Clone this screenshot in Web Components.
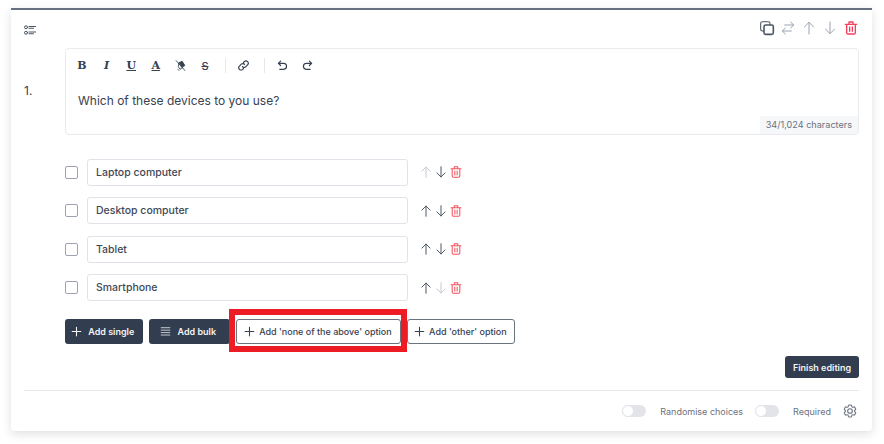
<!DOCTYPE html>
<html lang="en">
<head>
<meta charset="utf-8">
<title>Question editor</title>
<style>
	html, body { margin: 0; background: #fff; }
	body { min-height: 444px; overflow: hidden; font-family: Inter, "Liberation Sans", sans-serif; color: #374151; }
</style>
</head>
<body>
<question-card number="1.">
	<rich-editor slot="editor" count="34/1,024 characters">Which of these devices to you use?</rich-editor>

	<choice-row first>Laptop computer</choice-row>
	<choice-row>Desktop computer</choice-row>
	<choice-row>Tablet</choice-row>
	<choice-row last>Smartphone</choice-row>

	<action-button slot="actions" variant="dark" icon="plus" w="78">Add single</action-button>
	<action-button slot="actions" variant="dark" icon="bars" w="81">Add bulk</action-button>
	<action-button slot="actions" icon="plus" w="165" flagged>Add 'none of the above' option</action-button>
	<action-button slot="actions" icon="plus" w="108">Add 'other' option</action-button>

	<toggle-field slot="footer">Randomise choices</toggle-field>
	<toggle-field slot="footer">Required</toggle-field>
</question-card>

<script>
const ICONS = {
	plus: '<path d="M12 4v16M4 12h16"/>',
	bars: '<path d="M4 5h16M4 9.500h16M4 14h16M4 18.500h16"/>',
	up: '<path d="M12 21V3.500M5 10.500l7-7 7 7"/>',
	down: '<path d="M12 3v17.500M5 13.500l7 7 7-7"/>',
	swap: '<path d="M8 12l-4.500 4.500L8 21M3.500 16.500H17M16 3l4.500 4.500L16 12M20.500 7.500H7"/>',
	copy: '<rect x="2.500" y="2.500" width="14" height="14" rx="2.500"/><rect x="7.500" y="7.500" width="14" height="14" rx="2.500" fill="#fff" stroke-width="2.400"/>',
	trash: '<path d="M3.500 6.500h17M9 6.500V3h6v3.500M5.500 6.500V19a2 2 0 0 0 2 2h9a2 2 0 0 0 2-2V6.500M10 10.500v6.500M14 10.500v6.500"/>',
	list: '<circle cx="4" cy="6.500" r="3"/><circle cx="4" cy="17.500" r="3"/><path d="M10 5h14M10 8.500h9M10 16h14M10 19.500h9"/>',
	link: '<path d="M10 14a4 4 0 0 0 6 .4l3.500-3.500a4.200 4.200 0 0 0-6-6L12 6.500"/><path d="M14 10a4 4 0 0 0-6-.4l-3.500 3.500a4.200 4.200 0 0 0 6 6L12 17.500"/>',
	undo: '<path d="M8.500 4L4.500 8l4 4"/><path d="M4.500 8H14a5.500 5.500 0 0 1 0 11H7"/>',
	redo: '<path d="M15.500 4l4 4-4 4"/><path d="M19.500 8H10a5.500 5.500 0 0 0 0 11h7"/>',
	gear: '<path d="M9.594 3.940c.09-.542.56-.94 1.110-.94h2.593c.55 0 1.020.398 1.110.94l.213 1.281c.063.374.313.686.645.870.074.04.147.083.22.127.325.196.72.257 1.075.124l1.217-.456a1.125 1.125 0 0 1 1.370.49l1.296 2.247a1.125 1.125 0 0 1-.26 1.431l-1.003.827c-.293.241-.438.613-.43.992a7.723 7.723 0 0 1 0 .255c-.008.378.137.75.43.991l1.004.827c.424.35.534.955.26 1.430l-1.298 2.247a1.125 1.125 0 0 1-1.369.491l-1.217-.456c-.355-.133-.75-.072-1.076.124a6.470 6.470 0 0 1-.22.128c-.331.183-.581.495-.644.869l-.213 1.281c-.09.543-.56.94-1.110.94h-2.594c-.55 0-1.019-.398-1.110-.94l-.213-1.281c-.062-.374-.312-.686-.644-.87a6.520 6.520 0 0 1-.22-.127c-.325-.196-.72-.257-1.076-.124l-1.217.456a1.125 1.125 0 0 1-1.369-.49l-1.297-2.247a1.125 1.125 0 0 1 .26-1.431l1.004-.827c.292-.24.437-.613.43-.991a6.932 6.932 0 0 1 0-.255c.007-.38-.138-.751-.43-.992l-1.004-.827a1.125 1.125 0 0 1-.26-1.430l1.297-2.247a1.125 1.125 0 0 1 1.370-.491l1.216.456c.356.133.751.072 1.076-.124.072-.044.146-.086.22-.128.332-.183.582-.495.644-.869l.214-1.280z"/><circle cx="12" cy="12" r="3.500"/>',
	pen: '<path d="M9 7l6-3 5 8-5 3z" fill="currentColor"/><path d="M9 8l-1 6 3 5 5-3M7 19l2 2M4 3l16 18"/>'
}

function icon(name, size, width = 2) {
	return `<svg width="${size}" height="${size}" viewBox="0 0 24 24" fill="none" stroke="currentColor" stroke-width="${width}" stroke-linecap="round" stroke-linejoin="round" aria-hidden="true">${ICONS[name]}</svg>`
}

class QuestionCard extends HTMLElement {
	constructor() {
		super()
		this.attachShadow({ mode: 'open' })
		const number = this.getAttribute('number')
		this.shadowRoot.innerHTML = `
			<style>
				:host {
					display: flex;
					flex-direction: column;
					box-sizing: border-box;
					width: 861px;
					height: 423px;
					margin: 8px 0 0 11px;
					padding: 12px 13px 0;
					background: #fff;
					border-top: 2px solid #667080;
					box-shadow: 0 3px 10px rgba(55, 65, 81, .16);
					border-radius: 0 0 4px 4px;
				}
				header { display: flex; justify-content: space-between; height: 26px; color: #4b5563; }
				header svg { display: block; }
				.kind { margin-top: 2px; }
				.tools { display: flex; gap: 7px; margin: -1px 1px 0 0; height: 16px; }
				.tools svg { margin: -1px; }
				.muted { color: #9ca3af; }
				.del { color: #f43f5e; }
				.question { display: grid; grid-template-columns: 41px 1fr; }
				.num { font-size: 12px; margin-top: 36px; line-height: 14px; color: #374151; }
				.choices { display: flex; flex-direction: column; gap: 11.4px; margin: 24px 0 0 41px; }
				.actions { display: flex; gap: 6px; margin: 18px 0 0 41px; }
				.finish { display: flex; justify-content: flex-end; margin-top: 12px; }
				footer {
					display: flex; align-items: center; justify-content: flex-end;
					height: 40px; margin-top: 12px;
					border-top: 1px solid #e5e7eb;
					gap: 12px; color: #6b7280;
				}
				footer svg { display: block; margin: 0 1px 0 -1px; }
			</style>
			<header>
				<span class="kind">${icon('list', 12, 2)}</span>
				<div class="tools">
					<span>${icon('copy', 16, 1.600)}</span>
					<span class="muted">${icon('swap', 16, 1.500)}</span>
					<span class="muted">${icon('up', 16, 1.500)}</span>
					<span class="muted">${icon('down', 16, 1.500)}</span>
					<span class="del">${icon('trash', 16, 2)}</span>
				</div>
			</header>
			<div class="question">
				<div class="num">${number}</div>
				<slot name="editor"></slot>
			</div>
			<div class="choices"><slot></slot></div>
			<div class="actions"><slot name="actions"></slot></div>
			<div class="finish"><action-button variant="dark" w="74" h="22">Finish editing</action-button></div>
			<footer>
				<slot name="footer"></slot>
				${icon('gear', 16, 1.600)}
			</footer>
		`
	}
}

class RichEditor extends HTMLElement {
	constructor() {
		super()
		this.attachShadow({ mode: 'open' })
		this.shadowRoot.innerHTML = `
			<style>
				:host {
					display: block;
					position: relative;
					box-sizing: border-box;
					height: 87px;
					border: 1px solid #e9ebef;
					border-radius: 4px;
					overflow: hidden;
				}
				.bar { display: flex; align-items: center; height: 12px; margin: 11px 0 0 10px; color: #374151; }
				.bar > * { display: flex; justify-content: center; align-items: center; width: 12px; height: 12px; margin-right: 12.6px; }
				.bar svg { display: block; flex: none; }
				.g { font: 700 11px/12px "DejaVu Serif", "Liberation Serif", serif; }
				.i { font-style: italic; }
				.u { text-decoration: underline; text-underline-offset: 1px; }
				.s { font: 500 11px/12px Inter, sans-serif; text-decoration: line-through; }
				.bar .sep { width: 1px; height: 15px; margin: 0 12px 0 1.4px; background: #e5e7eb; }
				.text { margin: 21px 0 0 12px; font-size: 12px; line-height: 16px; color: #374151; }
				.count {
					position: absolute; right: 0; bottom: 0;
					padding: 0 6px; height: 18px; line-height: 18px;
					background: #f6f7f9; font-size: 9.100px; color: #6b7280;
				}
			</style>
			<div class="bar">
				<span class="g">B</span>
				<span class="g i">I</span>
				<span class="g u">U</span>
				<span class="g u">A</span>
				<span>${icon('pen', 13, 1.600)}</span>
				<span class="s">S</span>
				<span class="sep"></span>
				<span>${icon('link', 13, 2.200)}</span>
				<span class="sep"></span>
				<span>${icon('undo', 13, 2.200)}</span>
				<span>${icon('redo', 13, 2.200)}</span>
			</div>
			<div class="text"><slot></slot></div>
			<div class="count">${this.getAttribute('count')}</div>
		`
	}
}

class ChoiceRow extends HTMLElement {
	constructor() {
		super()
		this.attachShadow({ mode: 'open' })
		const upColor = this.hasAttribute('first') ? '#c4c8d0' : '#4b5563'
		const downColor = this.hasAttribute('last') ? '#c4c8d0' : '#4b5563'
		this.shadowRoot.innerHTML = `
			<style>
				:host { display: flex; align-items: center; height: 27px; }
				.box {
					box-sizing: border-box; width: 13px; height: 13px;
					border: 1px solid #9ca3af; border-radius: 2px; margin-right: 9px;
				}
				.field {
					box-sizing: border-box; width: 321px; height: 27px;
					padding-left: 8px;
					border: 1px solid #e1e3ea; border-radius: 3px;
					font-size: 10.500px; font-weight: 500; line-height: 25px; color: #3f4856;
				}
				.ops { display: flex; gap: 3px; margin-left: 12px; }
				.ops span { display: block; height: 12px; }
				.ops svg { display: block; margin: -1px; }
			</style>
			<div class="box"></div>
			<div class="field"><slot></slot></div>
			<div class="ops">
				<span style="color:${upColor}">${icon('up', 14, 1.700)}</span>
				<span style="color:${downColor}">${icon('down', 14, 1.700)}</span>
				<span style="color:#f4525f">${icon('trash', 14, 1.800)}</span>
			</div>
		`
	}
}

class ActionButton extends HTMLElement {
	constructor() {
		super()
		this.attachShadow({ mode: 'open' })
		const dark = this.getAttribute('variant') === 'dark'
		const iconName = this.getAttribute('icon')
		const flagged = this.hasAttribute('flagged')
		const lines = iconName === 'bars' ? 1.400 : 2
		this.shadowRoot.innerHTML = `
			<style>
				:host {
					display: inline-flex; position: relative;
					align-items: center; justify-content: center;
					gap: ${dark ? 5.500 : 2.800}px;
					box-sizing: border-box;
					padding-right: ${iconName ? (dark ? 4 : 2) : 0}px;
					width: ${this.getAttribute('w')}px;
					height: ${this.getAttribute('h') || 25}px;
					flex: none;
					border-radius: 3px;
					font-size: 9px; font-weight: ${dark ? 600 : 500};
					background: ${dark ? '#323d50' : '#fff'};
					color: ${dark ? '#f3f4f6' : '#374151'};
					border: ${dark ? 'none' : '1px solid #6b7280'};
					white-space: nowrap;
				}
				svg { display: block; flex: none; }
				.flag {
					position: absolute; left: -8px; top: -11px;
					width: 178px; height: 43px; box-sizing: border-box;
					border: 6px solid #ed1c24;
					pointer-events: none;
				}
			</style>
			${iconName ? icon(iconName, 13, lines) : ''}
			<span><slot></slot></span>
			${flagged ? '<div class="flag"></div>' : ''}
		`
	}
}

class ToggleField extends HTMLElement {
	constructor() {
		super()
		this.attachShadow({ mode: 'open' })
		this.shadowRoot.innerHTML = `
			<style>
				:host { display: inline-flex; align-items: center; gap: 14px; font-size: 9px; color: #6b7280; }
				.track { position: relative; width: 24px; height: 12px; border-radius: 6px; background: #e2e4e9; }
				.track::after {
					content: ""; position: absolute; left: 0; top: 0;
					box-sizing: border-box;
					width: 12px; height: 12px; border-radius: 50%; background: #fff;
					border: 1px solid #e2e4e9;
				}
			</style>
			<div class="track"></div>
			<span><slot></slot></span>
		`
	}
}

customElements.define('question-card', QuestionCard)
customElements.define('rich-editor', RichEditor)
customElements.define('choice-row', ChoiceRow)
customElements.define('action-button', ActionButton)
customElements.define('toggle-field', ToggleField)
</script>
</body>
</html>
